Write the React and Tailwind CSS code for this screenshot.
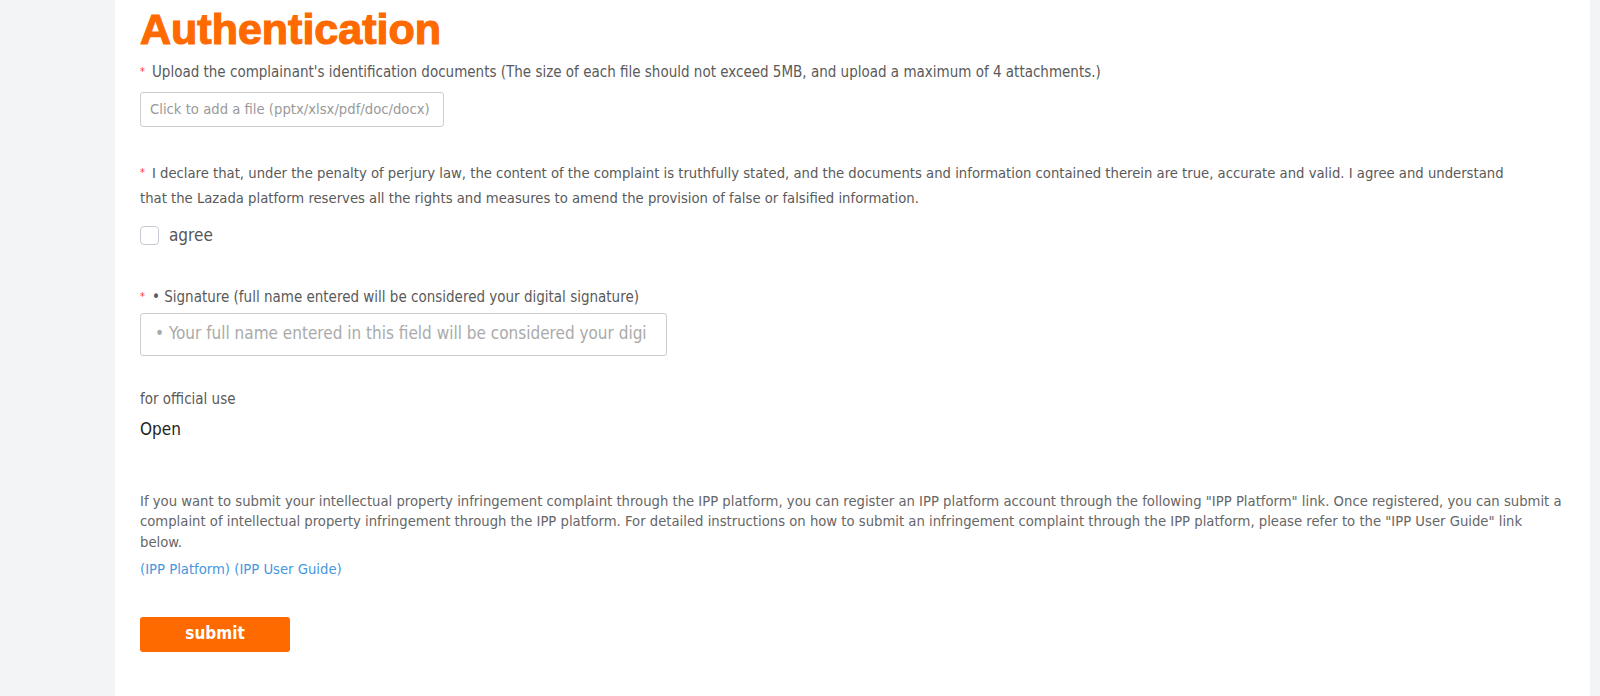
export default function App() {
  const font = { fontFamily: '"DejaVu Sans Condensed", Tahoma, "DejaVu Sans", sans-serif' }

  const Star = () => (
    <span className="text-[#f33] text-[11px] mr-[7px] relative top-[-2px]">*</span>
  )

  return (
    <div className="min-h-screen bg-[#f3f4f6] flex" style={font}>
      <div className="ml-[115px] w-[1475px] bg-white pl-[25px] pr-[20px] pb-[40px]">
        {/* Title */}
        <h1
          className="text-[43px] leading-[50px] font-bold text-[#ff6a00] pt-[4px]"
          style={{ fontFamily: '"Liberation Sans", Arial, sans-serif', WebkitTextStroke: "1.2px #ff6a00" }}
        >
          Authentication
        </h1>

        {/* Upload */}
        <div className="mt-[8px] text-[15px] leading-[20px] text-[#5a5a5a]">
          <Star />
          Upload the complainant's identification documents (The size of each file should not exceed 5MB, and upload a maximum of 4 attachments.)
        </div>
        <div className="mt-[8px] w-[304px] h-[35px] border border-[#ccc] rounded-[3px] flex items-center px-[9px] text-[14.7px] text-[#999] whitespace-nowrap overflow-hidden">
          Click to add a file (pptx/xlsx/pdf/doc/docx)
        </div>

        {/* Declaration */}
        <div className="mt-[34px] max-w-[1382px] text-[14.7px] leading-[23px] text-[#5a5a5a]">
          <Star />
          I declare that, under the penalty of perjury law, the content of the complaint is truthfully stated, and the documents and information contained therein are true, accurate and valid. I agree and understand that the Lazada platform reserves all the rights and measures to amend the provision of false or falsified information.
        </div>
        <label className="mt-[14px] flex items-center gap-[10px] text-[17px] text-[#555]">
          <span className="w-[19px] h-[19px] border border-[#c5cad3] rounded-[4px] bg-white" />
          agree
        </label>

        {/* Signature */}
        <div className="mt-[38px] text-[15px] leading-[20px] text-[#5a5a5a]">
          <Star />
          • Signature (full name entered will be considered your digital signature)
        </div>
        <div className="mt-[4px] w-[527px] h-[43px] border border-[#ccc] rounded-[3px] flex items-center px-[14px] text-[17px] text-[#aaa] overflow-hidden whitespace-nowrap">
          • Your full name entered in this field will be considered your digi
        </div>

        {/* Official use */}
        <div className="mt-[33px] text-[15px] leading-[20px] text-[#5a5a5a]">for official use</div>
        <div className="mt-[10px] text-[17px] leading-[20px] text-[#222]">Open</div>

        {/* IPP */}
        <p className="mt-[52px] max-w-[1425px] text-[14.7px] leading-[20.5px] text-[#666]">
          If you want to submit your intellectual property infringement complaint through the IPP platform, you can register an IPP platform account through the following "IPP Platform" link. Once registered, you can submit a complaint of intellectual property infringement through the IPP platform. For detailed instructions on how to submit an infringement complaint through the IPP platform, please refer to the "IPP User Guide" link below.
        </p>
        <div className="mt-[7px] text-[14.7px] leading-[20.5px] text-[#4597e0]">
          <a href="#">(IPP Platform)</a> <a href="#">(IPP User Guide)</a>
        </div>

        <button className="mt-[37px] w-[150px] h-[35px] bg-[#ff6a00] text-white text-[17px] font-semibold rounded-[3px]">
          submit
        </button>
      </div>
    </div>
  )
}
